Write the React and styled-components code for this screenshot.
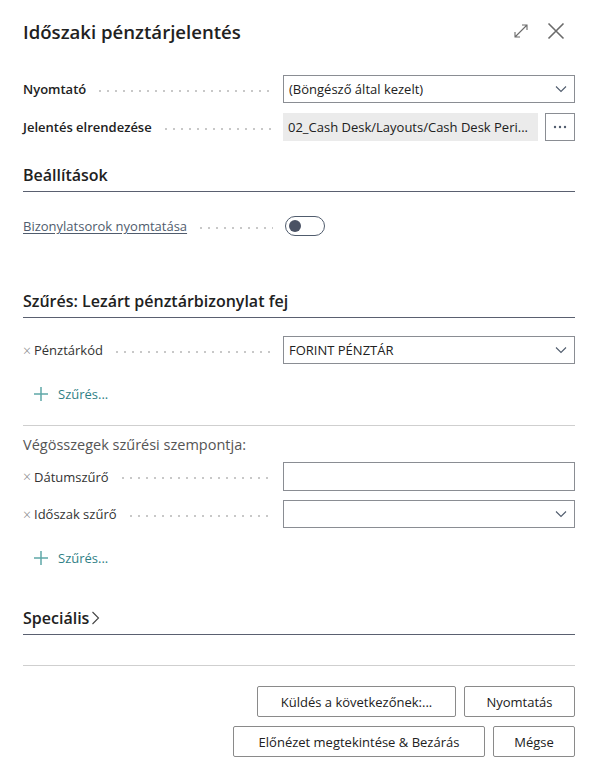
import React from 'react';
import styled, { createGlobalStyle } from 'styled-components';

const GlobalStyle = createGlobalStyle`
    html, body {
        margin: 0;
        padding: 0;
        background: #ffffff;
    }
    body {
        font-family: "Segoe UI", "Open Sans", "Noto Sans", sans-serif;
        color: #212121;
    }
`;

const Chevron = () => (
    <svg width="12" height="8" viewBox="0 0 12 8">
        <path d="M1 1.5 L6 6.5 L11 1.5" fill="none" stroke="#505c6d" strokeWidth="1.1" />
    </svg>
);

const PlusIcon = () => (
    <svg width="16" height="16" viewBox="0 0 16 16">
        <path d="M8 1 V15 M1 8 H15" fill="none" stroke="#5fa8a8" strokeWidth="1.5" />
    </svg>
);

const App = () => {
    return (
        <React.Fragment>
            <GlobalStyle />
            <Dialog>
                <Header>
                    <Title>Időszaki pénztárjelentés</Title>
                    <HeaderIcons>
                        <IconButton>
                            <svg width="16" height="16" viewBox="0 0 16 16">
                                <path d="M2 14 L14 2 M9 2 H14 V7 M2 9 V14 H7" fill="none" stroke="#6b6b6b" strokeWidth="1.1" />
                            </svg>
                        </IconButton>
                        <IconButton>
                            <svg width="18" height="18" viewBox="0 0 18 18">
                                <path d="M1.5 1.5 L16.5 16.5 M16.5 1.5 L1.5 16.5" fill="none" stroke="#6b6b6b" strokeWidth="1.6" />
                            </svg>
                        </IconButton>
                    </HeaderIcons>
                </Header>

                <Rows>
                    <FieldRow>
                        <Label bold>Nyomtató<Leader /></Label>
                        <Select>
                            <span>(Böngésző által kezelt)</span>
                            <Chevron />
                        </Select>
                    </FieldRow>
                    <FieldRow>
                        <Label bold>Jelentés elrendezése<Leader /></Label>
                        <LookupWrap>
                            <ReadOnly>02_Cash Desk/Layouts/Cash Desk Peri...</ReadOnly>
                            <DotsButton>
                                <svg width="14" height="4" viewBox="0 0 14 4">
                                    <circle cx="2" cy="2" r="1.2" fill="#505c6d" />
                                    <circle cx="7" cy="2" r="1.2" fill="#505c6d" />
                                    <circle cx="12" cy="2" r="1.2" fill="#505c6d" />
                                </svg>
                            </DotsButton>
                        </LookupWrap>
                    </FieldRow>
                </Rows>

                <SectionTitle top={23}>Beállítások</SectionTitle>

                <ToggleRow>
                    <Label><LinkLabel>Bizonylatsorok nyomtatása</LinkLabel><Leader /></Label>
                    <div><Toggle><Knob /></Toggle></div>
                </ToggleRow>

                <SectionTitle top={53}>Szűrés: Lezárt pénztárbizonylat fej</SectionTitle>

                <Rows top={18}>
                    <FieldRow>
                        <Label><Remove>×</Remove>Pénztárkód<Leader /></Label>
                        <Select>
                            <span>FORINT PÉNZTÁR</span>
                            <Chevron />
                        </Select>
                    </FieldRow>
                </Rows>

                <AddFilter>
                    <PlusIcon />
                    <span>Szűrés...</span>
                </AddFilter>

                <Divider top={22} />

                <SubTitle>Végösszegek szűrési szempontja:</SubTitle>

                <Rows top={7}>
                    <FieldRow>
                        <Label><Remove>×</Remove>Dátumszűrő<Leader /></Label>
                        <Input />
                    </FieldRow>
                    <FieldRow>
                        <Label><Remove>×</Remove>Időszak szűrő<Leader /></Label>
                        <Select>
                            <span></span>
                            <Chevron />
                        </Select>
                    </FieldRow>
                </Rows>

                <AddFilter>
                    <PlusIcon />
                    <span>Szűrés...</span>
                </AddFilter>

                <SectionTitle top={40}>
                    Speciális
                    <svg width="9" height="14" viewBox="0 0 9 14">
                        <path d="M1.5 1 L7.5 7 L1.5 13" fill="none" stroke="#444" strokeWidth="1.1" />
                    </svg>
                </SectionTitle>

                <Divider top={30} />

                <Footer>
                    <ButtonRow>
                        <Button width={199}>Küldés a következőnek:...</Button>
                        <Button width={111}>Nyomtatás</Button>
                    </ButtonRow>
                    <ButtonRow>
                        <Button width={252}>Előnézet megtekintése &amp; Bezárás</Button>
                        <Button width={82}>Mégse</Button>
                    </ButtonRow>
                </Footer>
            </Dialog>
        </React.Fragment>
    );
};

const Dialog = styled.div`
    width: 552px;
    padding: 0 23px;
    font-size: 13px;
`;

const Header = styled.div`
    display: flex;
    align-items: center;
    justify-content: space-between;
    height: 62px;
`;

const Title = styled.h1`
    margin: 0;
    font-size: 18.6px;
    font-weight: 600;
    color: #212121;
`;

const HeaderIcons = styled.div`
    display: flex;
    align-items: center;
    gap: 15px;
    margin-right: 9px;
`;

const IconButton = styled.div`
    width: 20px;
    height: 20px;
    display: flex;
    align-items: center;
    justify-content: center;
`;

const Rows = styled.div`
    display: flex;
    flex-direction: column;
    gap: 10px;
    margin-top: ${p => p.top ?? 13}px;
`;

const FieldRow = styled.div`
    display: grid;
    grid-template-columns: 260px minmax(0, 1fr);
    align-items: center;
    height: 28px;
`;

const Label = styled.div`
    display: flex;
    align-items: center;
    padding-right: 12px;
    font-size: 13px;
    font-weight: ${p => (p.bold ? 600 : 400)};
    color: ${p => (p.bold ? '#212121' : '#333333')};
    white-space: nowrap;
`;

const Leader = styled.span`
    flex: 1;
    height: 2px;
    margin-left: 10px;
    margin-top: 3px;
    background-image: radial-gradient(circle, #c8c8c8 0.8px, transparent 1px);
    background-size: 8px 2px;
    background-repeat: repeat-x;
`;

const Remove = styled.span`
    color: #8a8a8a;
    font-size: 14px;
    font-weight: 300;
    margin-right: 3px;
`;

const Select = styled.div`
    box-sizing: border-box;
    height: 28px;
    border: 1px solid #8a8d93;
    display: flex;
    align-items: center;
    justify-content: space-between;
    padding: 0 7px 0 5px;
    font-size: 13px;
    color: #212121;
`;

const Input = styled.div`
    box-sizing: border-box;
    height: 29px;
    border: 1px solid #8a8d93;
`;

const LookupWrap = styled.div`
    display: flex;
    gap: 7px;
    height: 28px;
    min-width: 0;
`;

const ReadOnly = styled.div`
    flex: 1;
    min-width: 0;
    background: #ebebeb;
    padding: 0 5px;
    font-size: 13px;
    line-height: 28px;
    white-space: nowrap;
`;

const DotsButton = styled.div`
    box-sizing: border-box;
    flex: none;
    width: 30px;
    height: 28px;
    border: 1px solid #8a8d93;
    display: flex;
    align-items: center;
    justify-content: center;
`;

const SectionTitle = styled.div`
    display: flex;
    align-items: center;
    gap: 2px;
    margin-top: ${p => p.top ?? 20}px;
    padding-bottom: 5px;
    border-bottom: 1.5px solid #5a6070;
    font-size: 16px;
    font-weight: 600;
    line-height: 22px;
    color: #212121;
`;

const ToggleRow = styled.div`
    display: grid;
    grid-template-columns: 262px 1fr;
    align-items: center;
    margin-top: 23px;
    height: 22px;
`;

const LinkLabel = styled.span`
    color: #505c6d;
    text-decoration: underline;
    text-underline-offset: 2px;
`;

const Toggle = styled.div`
    box-sizing: border-box;
    width: 40px;
    height: 20px;
    border: 1.5px solid #505c6d;
    border-radius: 10px;
    display: flex;
    align-items: center;
    padding-left: 3px;
`;

const Knob = styled.div`
    width: 12px;
    height: 12px;
    border-radius: 50%;
    background: #4a5264;
`;

const AddFilter = styled.div`
    display: flex;
    align-items: center;
    gap: 9px;
    margin-top: 21px;
    padding-left: 10px;
    height: 18px;
    font-size: 13px;
    color: #2f7f86;
`;

const Divider = styled.div`
    margin-top: ${p => p.top}px;
    border-top: 1px solid #cfcfcf;
`;

const SubTitle = styled.div`
    margin-top: 9px;
    font-size: 14.5px;
    color: #555555;
    line-height: 20px;
`;

const Footer = styled.div`
    display: flex;
    flex-direction: column;
    align-items: flex-end;
    gap: 9px;
    margin-top: 20px;
`;

const ButtonRow = styled.div`
    display: flex;
    gap: 8px;
`;

const Button = styled.button`
    box-sizing: border-box;
    width: ${p => p.width}px;
    height: 31px;
    border: 1px solid #8a8a8a;
    border-radius: 2px;
    background: #ffffff;
    font-family: inherit;
    font-size: 13px;
    color: #212121;
    cursor: pointer;
`;

export default App;
